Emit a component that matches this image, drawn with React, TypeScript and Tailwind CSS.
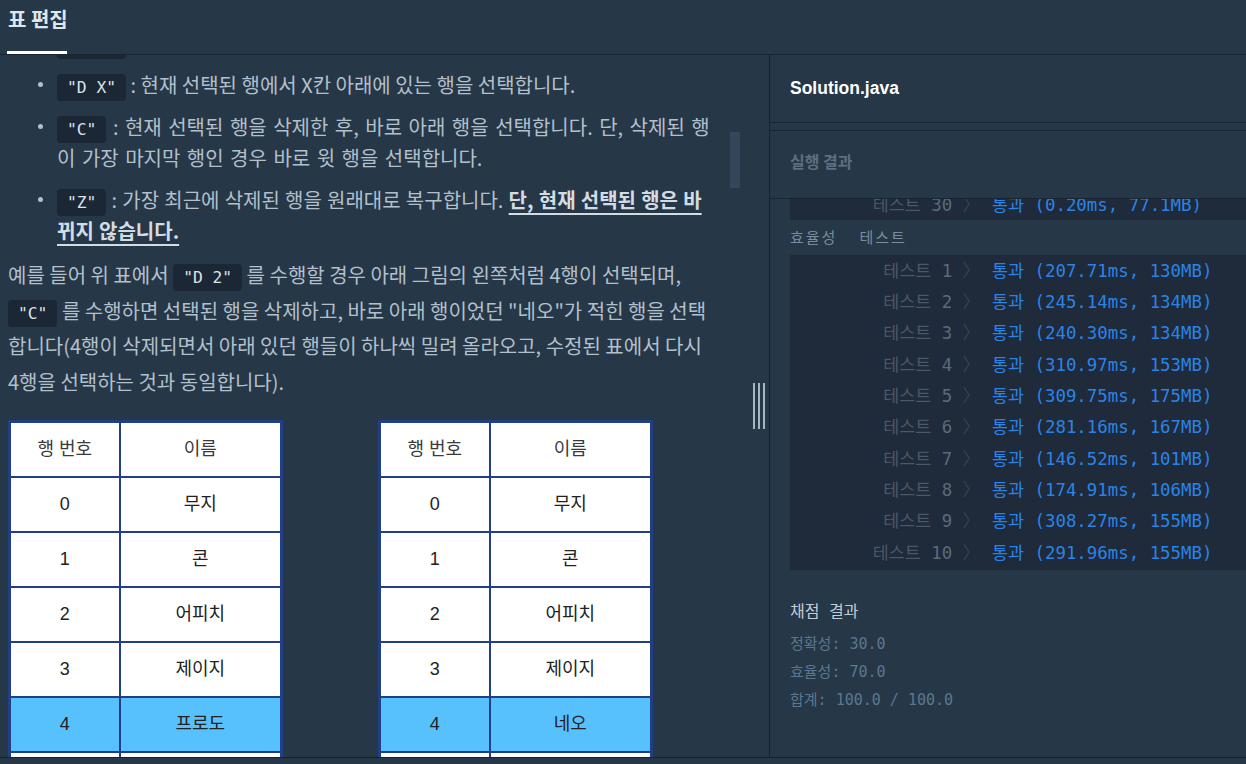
import React from "react";

const accuracyLast = { n: 30, r: "통과 (0.20ms, 77.1MB)" };

const efficiency = [
  "통과 (207.71ms, 130MB)",
  "통과 (245.14ms, 134MB)",
  "통과 (240.30ms, 134MB)",
  "통과 (310.97ms, 153MB)",
  "통과 (309.75ms, 175MB)",
  "통과 (281.16ms, 167MB)",
  "통과 (146.52ms, 101MB)",
  "통과 (174.91ms, 106MB)",
  "통과 (308.27ms, 155MB)",
  "통과 (291.96ms, 155MB)",
];

const before = ["무지", "콘", "어피치", "제이지", "프로도", "네오", "튜브", "라이언"];
const after = ["무지", "콘", "어피치", "제이지", "네오", "튜브", "라이언"];

function Code({ children }: { children: string }) {
  return (
    <code className="rounded-[4px] bg-[#1c2735] px-[10px] py-[4px] font-['DejaVu_Sans_Mono',monospace] text-[16.3px] leading-none text-[#dbe3ea] [word-spacing:0]">
      {children}
    </code>
  );
}

function Bullet({ children, className = "" }: { children: React.ReactNode; className?: string }) {
  return (
    <li className="mb-[11px] flex">
      <span className="flex h-[31px] w-[49px] shrink-0 items-center pl-[30px]">
        <span className="h-[5px] w-[5px] rounded-full bg-[#b2c0cc]" />
      </span>
      <div className={"min-w-0 flex-1 " + className}>{children}</div>
    </li>
  );
}

function NameTable({ names, selected }: { names: string[]; selected: number }) {
  return (
    <table className="w-[275px] shrink-0 border-collapse border-[3px] border-[#213f87] bg-white text-center font-['Liberation_Sans','Noto_Sans_CJK_KR',sans-serif] text-[18px] text-[#222]">
      <tbody>
        <tr className="h-[55px] text-[#3a3a3a]">
          <td className="w-[110px] border-[2.5px] border-[#213f87]">행 번호</td>
          <td className="border-[2.5px] border-[#213f87]">이름</td>
        </tr>
        {names.map((name, i) => (
          <tr key={i} className={i === selected ? "h-[55px] bg-[#57c1fd]" : "h-[55px]"}>
            <td className="border-[2.5px] border-[#213f87]">{i}</td>
            <td className="border-[2.5px] border-[#213f87]">{name}</td>
          </tr>
        ))}
      </tbody>
    </table>
  );
}

function ResultRow({ n, r }: { n: number; r: string }) {
  return (
    <div className="flex h-[31.3px] items-center whitespace-pre">
      <div className="w-[190px] text-right text-[#4a5868]">
        테스트 <span className="text-[#5a6a7c]">{n}</span> <span className="text-[#364353]">〉</span>
      </div>
      <div className="pl-3 text-[#2a84e6]">{r}</div>
    </div>
  );
}

export default function App() {
  return (
    <div className="flex h-[764px] w-[1246px] flex-col overflow-hidden bg-[#263747] font-['Noto_Sans_CJK_KR',sans-serif]">
      {/* top tab bar */}
      <div className="flex h-[55px] shrink-0 border-b border-[#1a2533] px-[7px]">
        <div className="h-full w-[60px] whitespace-nowrap border-b-[3px] border-white pl-[1px] pt-[7px] text-[20px] font-bold leading-[24px] text-[#dfe6ec]">
          표 편집
        </div>
      </div>

      <div className="flex min-h-0 flex-1">
        {/* description */}
        <div className="relative w-[769px] shrink-0 overflow-hidden">
          <div className="pl-2 pr-[55px] text-[20px] text-[#b2c0cc]">
            <ul className="mt-[-28px] leading-[31px]">
              <Bullet>
                <Code>"U X"</Code> : 현재 선택된 행에서 X칸 위에 있는 행을 선택합니다.
              </Bullet>
              <Bullet>
                <Code>"D X"</Code> : 현재 선택된 행에서 X칸 아래에 있는 행을 선택합니다.
              </Bullet>
              <Bullet className="[word-spacing:2px]">
                <Code>"C"</Code> : 현재 선택된 행을 삭제한 후, 바로 아래 행을 선택합니다. 단, 삭제된 행이 가장 마지막 행인 경우 바로 윗 행을 선택합니다.
              </Bullet>
              <Bullet className="[word-spacing:0.7px]">
                <Code>"Z"</Code> : 가장 최근에 삭제된 행을 원래대로 복구합니다.{" "}
                <strong className="font-bold text-[#d3dce3] underline decoration-2 underline-offset-[5px]">
                  단, 현재 선택된 행은 바뀌지 않습니다.
                </strong>
              </Bullet>
            </ul>
            <p className="mt-[8px] leading-[35.5px]">
              예를 들어 위 표에서 <Code>"D 2"</Code> 를 수행할 경우 아래 그림의 왼쪽처럼 4행이 선택되며,{" "}
              <Code>"C"</Code> 를 수행하면 선택된 행을 삭제하고, 바로 아래 행이었던 "네오"가 적힌 행을 선택합니다(4행이 삭제되면서 아래 있던 행들이 하나씩 밀려 올라오고, 수정된 표에서 다시 4행을 선택하는 것과 동일합니다).
            </p>
            <div className="mt-[21px] flex items-start gap-[95px]">
              <NameTable names={before} selected={4} />
              <NameTable names={after} selected={4} />
            </div>
          </div>

          {/* scrollbar thumb */}
          <div className="absolute left-[730px] top-[77px] h-[56px] w-[10px] bg-[#34465a]" />
          {/* resize handle */}
          <div className="absolute right-[4px] top-[328px] flex h-[46px] gap-[2.5px]">
            <span className="w-[2.3px] bg-[#a7b6c4]" />
            <span className="w-[2.3px] bg-[#a7b6c4]" />
            <span className="w-[2.3px] bg-[#a7b6c4]" />
          </div>
        </div>

        {/* right side */}
        <div className="flex min-w-0 flex-1 flex-col overflow-hidden border-l border-[#172130]">
          <div className="flex h-[68px] shrink-0 items-center border-b border-[#1a2533] px-5 font-['Liberation_Sans',sans-serif] text-[17.5px] font-bold text-white">
            Solution.java
          </div>
          <div className="h-[7px] shrink-0" />
          <div className="flex h-[69px] shrink-0 items-center border-y border-[#1a2533] px-5 pb-[7px] text-[16px] font-bold text-[#5d6f80]">
            실행 결과
          </div>
          <div className="min-h-0 flex-1 overflow-hidden px-5 font-['DejaVu_Sans_Mono','Noto_Sans_CJK_KR',monospace] text-[17.4px]">
            <div className="mt-[-10px] w-[480px] bg-[#1f2a3a]">
              <ResultRow n={accuracyLast.n} r={accuracyLast.r} />
            </div>
            <div className="flex h-[35px] items-center whitespace-pre text-[15px] tracking-[2px] text-[#7b8c9c]">
              효율성  테스트
            </div>
            <div className="w-[480px] bg-[#1f2a3a] pb-[2px]">
              {efficiency.map((r, i) => (
                <ResultRow key={i} n={i + 1} r={r} />
              ))}
            </div>
            <div className="mt-[28px] text-[16px] leading-[28px] text-[#c3cdd5]">채점 결과</div>
            <div className="mt-[4px] text-[15px] leading-[28px] text-[#5b7890]">
              <div>정확성: 30.0</div>
              <div>효율성: 70.0</div>
              <div>합계: 100.0 / 100.0</div>
            </div>
          </div>
        </div>
      </div>

      <div className="h-[7px] shrink-0 border-t border-[#18222f]" />
    </div>
  );
}
